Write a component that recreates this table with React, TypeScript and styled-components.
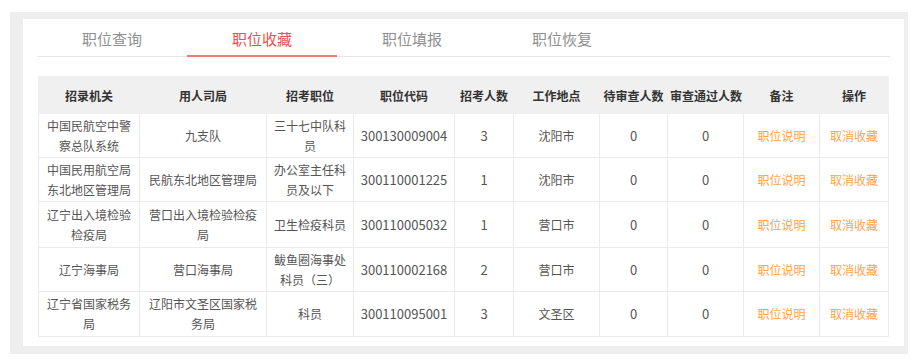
import React from "react";
import styled, { createGlobalStyle } from "styled-components";

const Global = createGlobalStyle`
  html, body { margin: 0; padding: 0; background: #ffffff; }
  body { font-family: "Microsoft YaHei", "Noto Sans CJK SC", "Noto Sans", sans-serif; }
  * { box-sizing: border-box; }
`;

const Frame = styled.div`
  margin: 12px 0 0 10px;
  width: 898px;
  height: 342px;
  background: #eeeeee;
  padding: 7px 4px 8px 13px;
`;

const Panel = styled.div`
  width: 881px;
  height: 327px;
  background: #ffffff;
  padding: 0 14px;
  display: flex;
  flex-direction: column;
`;

const TabBar = styled.div`
  display: flex;
  height: 38px;
  border-bottom: 1px solid #e6e6e6;
`;

const Tab = styled.div<{ $active?: boolean }>`
  width: 150px;
  display: flex;
  align-items: center;
  justify-content: center;
  font-size: 15px;
  color: ${(p) => (p.$active ? "#e8514f" : "#8f8f8f")};
  border-bottom: 2px solid ${(p) => (p.$active ? "#ee7a78" : "transparent")};
  margin-bottom: -1px;
  padding-top: 2px;
`;

const Table = styled.table`
  margin: 19px 0 0 1px;
  width: 850px;
  border-collapse: collapse;
  table-layout: fixed;
  font-size: 12px;
`;

const Th = styled.th`
  height: 37px;
  background: #f0f0f0;
  color: #333333;
  font-weight: bold;
  padding: 0 2px;
  text-align: center;
  border: 1px solid #f0f0f0;
  white-space: nowrap;
`;

const Row = styled.tr<{ $h: number }>`
  height: ${(p) => p.$h}px;
`;

const Td = styled.td<{ $num?: boolean }>`
  padding: 0 4px;
  text-align: center;
  border: 1px solid #ebebeb;
  color: #555555;
  line-height: 20px;
  white-space: nowrap;
  font-size: ${(p) => (p.$num ? "13px" : "12px")};
`;

const Line = styled.div`
  display: block;
`;

const Link = styled.span`
  color: #ffa24a;
  cursor: pointer;
`;

const widths = [101, 127, 87, 101, 59, 86, 68, 76, 76, 69];
const headers = ["招录机关", "用人司局", "招考职位", "职位代码", "招考人数", "工作地点", "待审查人数", "审查通过人数", "备注", "操作"];

type RowData = { h: number; org: string[]; dept: string[]; pos: string[]; code: string; n: string; place: string };

const rows: RowData[] = [
  { h: 44, org: ["中国民航空中警", "察总队系统"], dept: ["九支队"], pos: ["三十七中队科", "员"], code: "300130009004", n: "3", place: "沈阳市" },
  { h: 44, org: ["中国民用航空局", "东北地区管理局"], dept: ["民航东北地区管理局"], pos: ["办公室主任科", "员及以下"], code: "300110001225", n: "1", place: "沈阳市" },
  { h: 46, org: ["辽宁出入境检验", "检疫局"], dept: ["营口出入境检验检疫", "局"], pos: ["卫生检疫科员"], code: "300110005032", n: "1", place: "营口市" },
  { h: 44, org: ["辽宁海事局"], dept: ["营口海事局"], pos: ["鲅鱼圈海事处", "科员（三）"], code: "300110002168", n: "2", place: "营口市" },
  { h: 45, org: ["辽宁省国家税务", "局"], dept: ["辽阳市文圣区国家税", "务局"], pos: ["科员"], code: "300110095001", n: "3", place: "文圣区" },
];

const Lines = ({ items }: { items: string[] }) => (
  <>
    {items.map((t, i) => (
      <Line key={i}>{t}</Line>
    ))}
  </>
);

export default function App() {
  return (
    <>
      <Global />
      <Frame>
        <Panel>
          <TabBar>
            <Tab>职位查询</Tab>
            <Tab $active>职位收藏</Tab>
            <Tab>职位填报</Tab>
            <Tab>职位恢复</Tab>
          </TabBar>
          <Table>
            <colgroup>
              {widths.map((w, i) => (
                <col key={i} style={{ width: w }} />
              ))}
            </colgroup>
            <thead>
              <tr>
                {headers.map((h) => (
                  <Th key={h}>{h}</Th>
                ))}
              </tr>
            </thead>
            <tbody>
              {rows.map((r, i) => (
                <Row key={i} $h={r.h}>
                  <Td><Lines items={r.org} /></Td>
                  <Td><Lines items={r.dept} /></Td>
                  <Td><Lines items={r.pos} /></Td>
                  <Td $num>{r.code}</Td>
                  <Td $num>{r.n}</Td>
                  <Td>{r.place}</Td>
                  <Td $num>0</Td>
                  <Td $num>0</Td>
                  <Td><Link>职位说明</Link></Td>
                  <Td><Link>取消收藏</Link></Td>
                </Row>
              ))}
            </tbody>
          </Table>
        </Panel>
      </Frame>
    </>
  );
}
